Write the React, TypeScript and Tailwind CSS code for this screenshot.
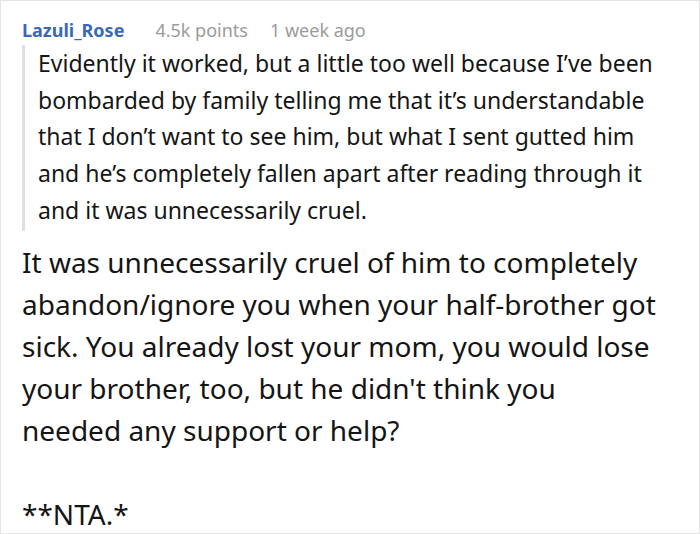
const quoteLines = [
    'Evidently it worked, but a little too well because I’ve been',
    'bombarded by family telling me that it’s understandable',
    'that I don’t want to see him, but what I sent gutted him',
    'and he’s completely fallen apart after reading through it',
    'and it was unnecessarily cruel.',
]

const replyLines = [
    'It was unnecessarily cruel of him to completely',
    'abandon/ignore you when your half-brother got',
    'sick. You already lost your mom, you would lose',
    "your brother, too, but he didn't think you",
    'needed any support or help?',
]

export default function App() {
    return (
        <div className="w-[700px] h-[534px] overflow-hidden bg-white border border-[#e4e4e4] font-['Noto_Sans',sans-serif]">
            <div className="pl-[21px] pt-[16px]">
                <div className="flex items-baseline text-[18px] leading-[26px]">
                    <span className="font-bold text-[#3a68b8] mr-[31px]">Lazuli_Rose</span>
                    <span className="text-[#9b9b9b] mr-[22px]">4.5k points</span>
                    <span className="text-[#9b9b9b]">1 week ago</span>
                </div>
                <blockquote className="border-l-[3px] border-[#e0e0e0] pl-[13px] mt-[2px] pb-[2px] text-[23px] leading-[36.7px] text-[#151515] whitespace-nowrap">
                    {quoteLines.map((line) => (
                        <span key={line} className="block">{line}</span>
                    ))}
                </blockquote>
                <div className="mt-[10px] text-[28px] leading-[42px] text-[#151515] whitespace-nowrap">
                    {replyLines.map((line) => (
                        <span key={line} className="block">{line}</span>
                    ))}
                    <p className="mt-[42px]">**NTA.*</p>
                </div>
            </div>
        </div>
    )
}
